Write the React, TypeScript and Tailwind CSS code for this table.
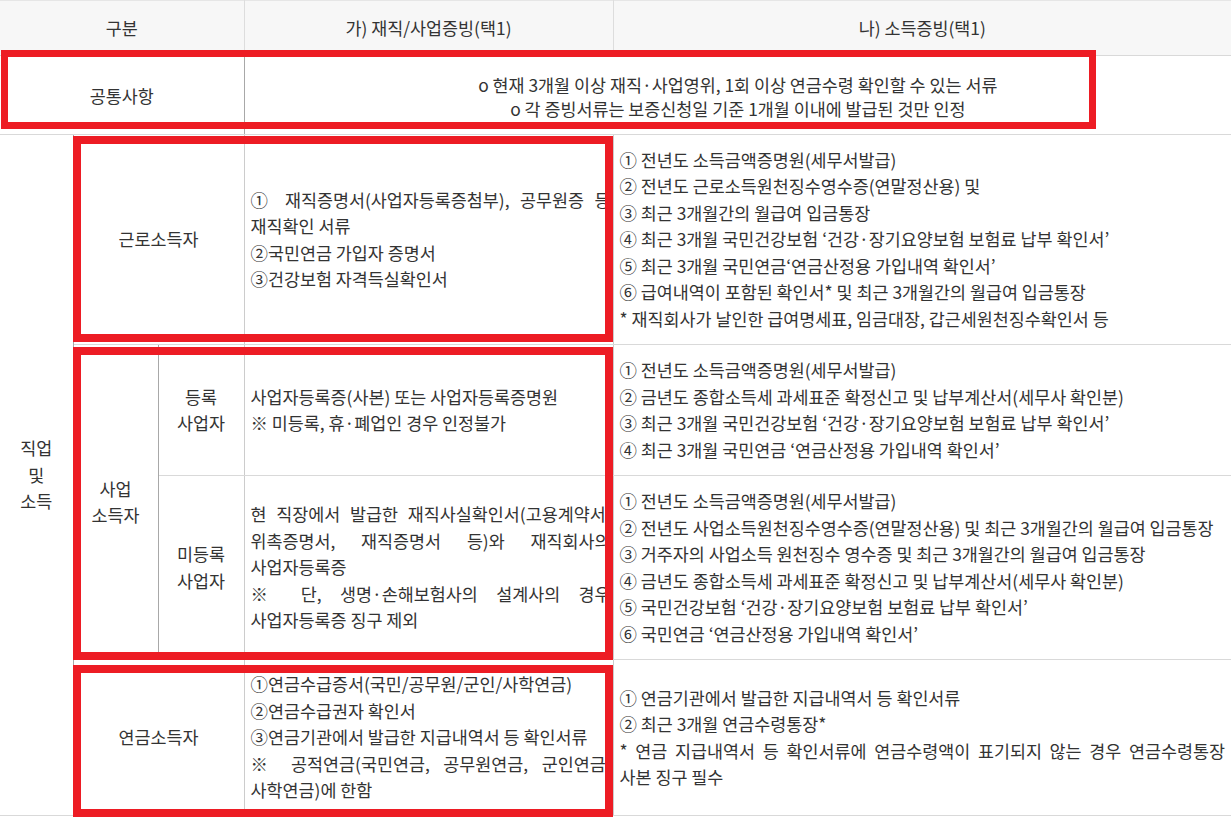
import * as React from "react"

const LINE_H = "border-b border-[#d9d9d9]"
const DARK_R = "border-r border-r-[#a8a8a8]"
const LIGHT_R = "border-r border-r-[#cccccc]"
const RED_BOX = "pointer-events-none absolute border-[8px] border-[#ed1c24]"

function J({ children }: { children: React.ReactNode }) {
  // one justified line, spaces stretched to the cell edge
  return <div className="text-justify [text-align-last:justify]">{children}</div>
}

function Lines({ items }: { items: string[] }) {
  return (
    <>
      {items.map((t) => (
        <div key={t} className="whitespace-nowrap">
          {t}
        </div>
      ))}
    </>
  )
}

export default function App() {
  return (
    <div className="relative h-[818px] w-[1231px] overflow-hidden bg-white font-['Noto_Sans_CJK_KR',sans-serif] text-[17.4px] leading-[26.5px] text-[#333]">
      <table className="w-[1231px] table-fixed border-collapse">
        <colgroup>
          <col className="w-[73px]" />
          <col className="w-[85px]" />
          <col className="w-[86px]" />
          <col className="w-[369px]" />
          <col className="w-[618px]" />
        </colgroup>
        <thead>
          <tr className="h-[55px] bg-[#f7f7f7]">
            <th colSpan={3} className={`border-t border-t-[#e6e6e6] border-r border-r-[#dddddd] ${LINE_H} font-normal`}>
              구분
            </th>
            <th className={`border-t border-t-[#e6e6e6] border-r border-r-[#dddddd] ${LINE_H} font-normal`}>
              가) 재직/사업증빙(택1)
            </th>
            <th className={`border-t border-t-[#e6e6e6] ${LINE_H} font-normal`}>나) 소득증빙(택1)</th>
          </tr>
        </thead>
        <tbody>
          <tr className="h-[79px]">
            <td colSpan={3} className={`${LINE_H} ${DARK_R} pt-[3px] text-center`}>
              공통사항
            </td>
            <td colSpan={2} className={`${LINE_H} pt-[3px] text-center leading-[23.5px]`}>
              <div>o 현재 3개월 이상 재직·사업영위, 1회 이상 연금수령 확인할 수 있는 서류</div>
              <div>o 각 증빙서류는 보증신청일 기준 1개월 이내에 발급된 것만 인정</div>
            </td>
          </tr>

          <tr className="h-[210px]">
            <td rowSpan={4} className={`${LINE_H} ${DARK_R} text-center`}>
              직업
              <br />및
              <br />
              소득
            </td>
            <td colSpan={2} className={`${LINE_H} ${LIGHT_R} text-center`}>
              근로소득자
            </td>
            <td className={`${LINE_H} ${LIGHT_R} pl-[6px] pr-[2px]`}>
              <J>① 재직증명서(사업자등록증첨부), 공무원증 등</J>
              <div>재직확인 서류</div>
              <div>②국민연금 가입자 증명서</div>
              <div>③건강보험 자격득실확인서</div>
            </td>
            <td className={`${LINE_H} pl-[6px]`}>
              <Lines
                items={[
                  "① 전년도 소득금액증명원(세무서발급)",
                  "② 전년도 근로소득원천징수영수증(연말정산용) 및",
                  "③ 최근 3개월간의 월급여 입금통장",
                  "④ 최근 3개월 국민건강보험 ‘건강·장기요양보험 보험료 납부 확인서’",
                  "⑤ 최근 3개월 국민연금‘연금산정용 가입내역 확인서’",
                  "⑥ 급여내역이 포함된 확인서* 및 최근 3개월간의 월급여 입금통장",
                  "* 재직회사가 날인한 급여명세표, 임금대장, 갑근세원천징수확인서 등",
                ]}
              />
            </td>
          </tr>

          <tr className="h-[131px]">
            <td rowSpan={2} className={`${LINE_H} ${DARK_R} text-center`}>
              사업
              <br />
              소득자
            </td>
            <td className={`${LINE_H} ${LIGHT_R} text-center`}>
              등록
              <br />
              사업자
            </td>
            <td className={`${LINE_H} ${LIGHT_R} pl-[6px] pr-[2px]`}>
              <div>사업자등록증(사본) 또는 사업자등록증명원</div>
              <div>※ 미등록, 휴·폐업인 경우 인정불가</div>
            </td>
            <td className={`${LINE_H} pl-[6px]`}>
              <Lines
                items={[
                  "① 전년도 소득금액증명원(세무서발급)",
                  "② 금년도 종합소득세 과세표준 확정신고 및 납부계산서(세무사 확인분)",
                  "③ 최근 3개월 국민건강보험 ‘건강·장기요양보험 보험료 납부 확인서’",
                  "④ 최근 3개월 국민연금 ‘연금산정용 가입내역 확인서’",
                ]}
              />
            </td>
          </tr>

          <tr className="h-[184px]">
            <td className={`${LINE_H} ${LIGHT_R} text-center`}>
              미등록
              <br />
              사업자
            </td>
            <td className={`${LINE_H} ${LIGHT_R} pl-[6px] pr-[2px]`}>
              <J>현 직장에서 발급한 재직사실확인서(고용계약서,</J>
              <J>위촉증명서, 재직증명서 등)와 재직회사의</J>
              <div>사업자등록증</div>
              <J>※ 단, 생명·손해보험사의 설계사의 경우</J>
              <div>사업자등록증 징구 제외</div>
            </td>
            <td className={`${LINE_H} pl-[6px]`}>
              <Lines
                items={[
                  "① 전년도 소득금액증명원(세무서발급)",
                  "② 전년도 사업소득원천징수영수증(연말정산용) 및 최근 3개월간의 월급여 입금통장",
                  "③ 거주자의 사업소득 원천징수 영수증 및 최근 3개월간의 월급여 입금통장",
                  "④ 금년도 종합소득세 과세표준 확정신고 및 납부계산서(세무사 확인분)",
                  "⑤ 국민건강보험 ‘건강·장기요양보험 보험료 납부 확인서’",
                  "⑥ 국민연금 ‘연금산정용 가입내역 확인서’",
                ]}
              />
            </td>
          </tr>

          <tr className="h-[156px]">
            <td colSpan={2} className={`${LINE_H} ${LIGHT_R} text-center`}>
              연금소득자
            </td>
            <td className={`${LINE_H} ${LIGHT_R} pl-[6px] pr-[2px]`}>
              <div>①연금수급증서(국민/공무원/군인/사학연금)</div>
              <div>②연금수급권자 확인서</div>
              <div>③연금기관에서 발급한 지급내역서 등 확인서류</div>
              <J>※ 공적연금(국민연금, 공무원연금, 군인연금,</J>
              <div>사학연금)에 한함</div>
            </td>
            <td className={`${LINE_H} pl-[6px] pr-[6px]`}>
              <div>① 연금기관에서 발급한 지급내역서 등 확인서류</div>
              <div>② 최근 3개월 연금수령통장*</div>
              <J>* 연금 지급내역서 등 확인서류에 연금수령액이 표기되지 않는 경우 연금수령통장</J>
              <div>사본 징구 필수</div>
            </td>
          </tr>
        </tbody>
      </table>

      {/* red highlight frames drawn over the table */}
      <div className="pointer-events-none absolute left-[1px] top-[50px] h-[79px] w-[1095px] border-[7px] border-[#ed1c24]" />
      <div className={`${RED_BOX} left-[73px] top-[136px] h-[206px] w-[540px]`} />
      <div className={`${RED_BOX} left-[73px] top-[347px] h-[313px] w-[540px]`} />
      <div className={`${RED_BOX} left-[73px] top-[665px] h-[152px] w-[540px]`} />
    </div>
  )
}
